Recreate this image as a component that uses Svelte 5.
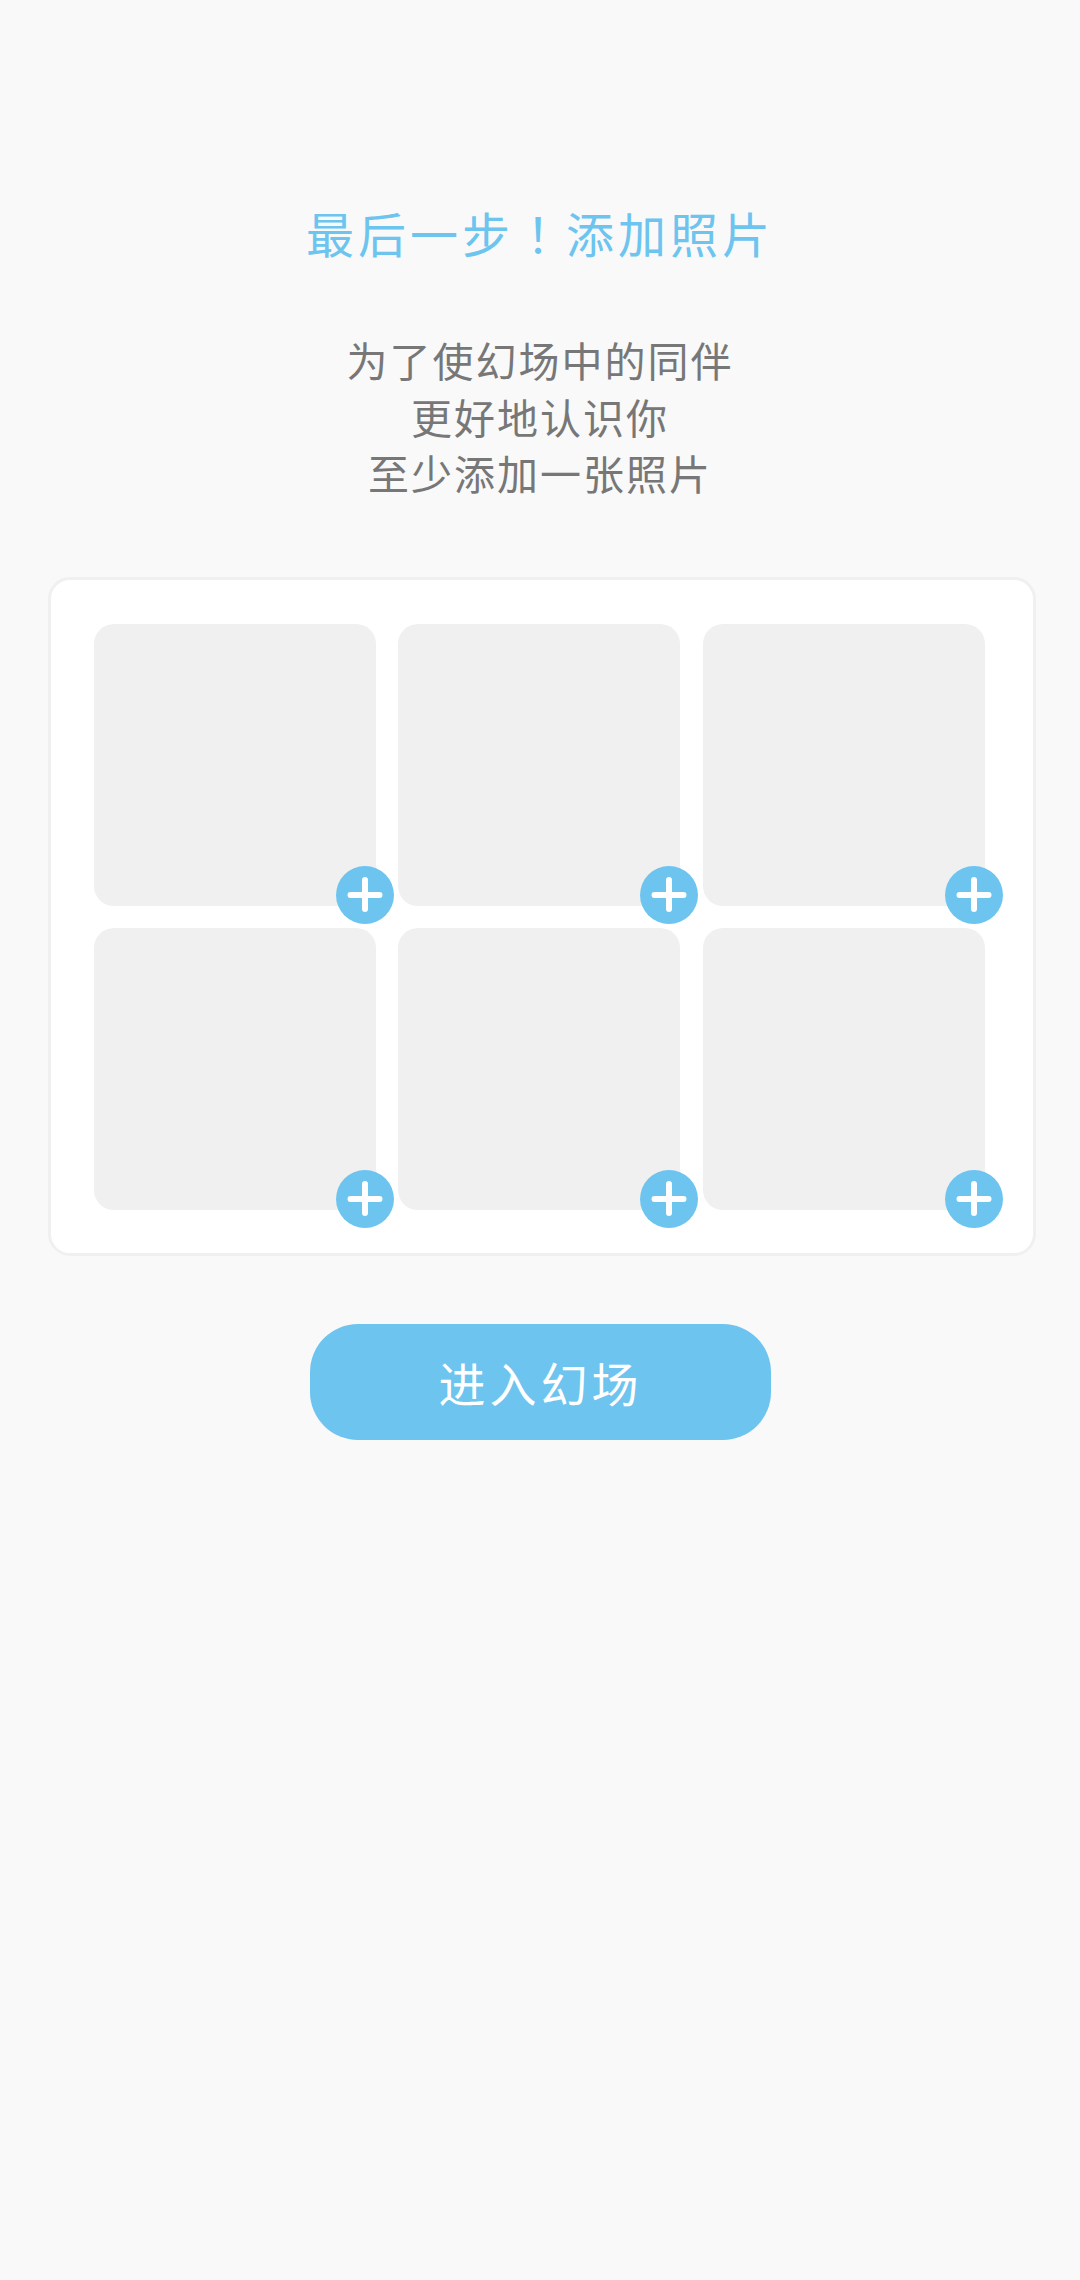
<script>
	const slots = [0, 1, 2, 3, 4, 5];
</script>

<main class="page">
	<h1>最后一步<span class="bang">！</span>添加照片</h1>
	<p class="intro">为了使幻场中的同伴<br />更好地认识你<br />至少添加一张照片</p>

	<div class="card">
		{#each slots as slot (slot)}
			<div class="tile">
				<button class="add" aria-label="添加照片">
					<svg viewBox="0 0 58 58" width="58" height="58">
						<path d="M29 14v29M14.500 29h29" />
					</svg>
				</button>
			</div>
		{/each}
	</div>

	<button class="enter">进入幻场</button>
</main>

<style>
	:global(body) {
		background: #f9f9f9;
	}

	.page {
		display: flex;
		flex-direction: column;
		align-items: center;
		min-height: 2280px;
		box-sizing: border-box;
		padding-top: 199px;
		font-family: "Noto Sans CJK SC", "Noto Sans", sans-serif;
	}

	h1 {
		color: #6cc4ef;
		font-size: 48px;
		font-weight: 400;
		letter-spacing: 4px;
		line-height: 66px;
		margin: 0;
	}

	.bang {
		font-family: "Noto Sans CJK TC", sans-serif;
	}

	.intro {
		color: #777;
		font-size: 41px;
		letter-spacing: 2px;
		line-height: 56.500px;
		margin: 66px 0 0;
		text-align: center;
	}

	.card {
		background: #fff;
		border: 3px solid #f0f0f0;
		border-radius: 22px;
		box-sizing: border-box;
		display: grid;
		gap: 22.300px;
		grid-template-columns: repeat(3, 282px);
		margin: 76px 0 0 4px;
		padding: 44px 48px 43px 43px;
		width: 988px;
	}

	.tile {
		background: #f0f0f0;
		border-radius: 20px;
		height: 282px;
		position: relative;
	}

	.add {
		background: #6cc4ef;
		border: 0;
		border-radius: 50%;
		bottom: -18px;
		height: 58px;
		padding: 0;
		position: absolute;
		right: -18px;
		width: 58px;
	}

	.add svg {
		display: block;
	}

	.add path {
		fill: none;
		stroke: #fff;
		stroke-linecap: round;
		stroke-width: 6px;
	}

	.enter {
		background: #6cc4ef;
		border: 0;
		border-radius: 48px;
		color: #fff;
		font-family: inherit;
		font-size: 47px;
		height: 116px;
		letter-spacing: 4px;
		margin-top: 68px;
		padding: 0 0 0 1px;
		width: 461px;
	}
</style>
